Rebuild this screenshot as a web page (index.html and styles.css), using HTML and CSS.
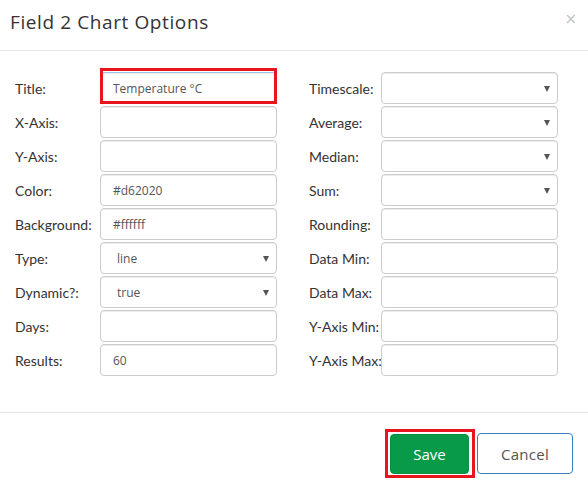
FILE: index.html
```html
<!DOCTYPE html>
<html>
<head>
<meta charset="utf-8">
<link rel="stylesheet" href="styles.css">
</head>
<body>
<div class="modal">
  <div class="modal-header">
    <h4 class="modal-title">Field 2 Chart Options</h4>
    <span class="close">×</span>
  </div>
  <div class="modal-body">
    <div class="cols">
      <div class="col col-left">
        <div class="row"><label>Title:</label><div class="field highlight"><input class="input" value="Temperature °C"></div></div>
        <div class="row"><label>X-Axis:</label><div class="field"><input class="input" value=""></div></div>
        <div class="row"><label>Y-Axis:</label><div class="field"><input class="input" value=""></div></div>
        <div class="row"><label>Color:</label><div class="field"><input class="input" value="#d62020"></div></div>
        <div class="row"><label>Background:</label><div class="field"><input class="input" value="#ffffff"></div></div>
        <div class="row"><label>Type:</label><div class="field select"><span class="sel-text">line</span></div></div>
        <div class="row"><label>Dynamic?:</label><div class="field select"><span class="sel-text">true</span></div></div>
        <div class="row"><label>Days:</label><div class="field"><input class="input" value=""></div></div>
        <div class="row"><label>Results:</label><div class="field"><input class="input" value="60"></div></div>
      </div>
      <div class="col col-right">
        <div class="row"><label>Timescale:</label><div class="field select"><span class="sel-text"></span></div></div>
        <div class="row"><label>Average:</label><div class="field select"><span class="sel-text"></span></div></div>
        <div class="row"><label>Median:</label><div class="field select"><span class="sel-text"></span></div></div>
        <div class="row"><label>Sum:</label><div class="field select"><span class="sel-text"></span></div></div>
        <div class="row"><label>Rounding:</label><div class="field"><input class="input" value=""></div></div>
        <div class="row"><label>Data Min:</label><div class="field"><input class="input" value=""></div></div>
        <div class="row"><label>Data Max:</label><div class="field"><input class="input" value=""></div></div>
        <div class="row"><label>Y-Axis Min:</label><div class="field"><input class="input" value=""></div></div>
        <div class="row"><label>Y-Axis Max:</label><div class="field"><input class="input" value=""></div></div>
      </div>
    </div>
  </div>
  <div class="modal-footer">
    <span class="save-wrap"><button class="btn btn-save">Save</button></span>
    <button class="btn btn-cancel">Cancel</button>
  </div>
</div>
</body>
</html>
```

FILE: styles.css
```css
* { box-sizing: border-box; }
html, body { margin: 0; padding: 0; background: #fff; }
body {
  width: 588px;
  height: 490px;
  overflow: hidden;
  font-family: "Lato", "Open Sans", sans-serif;
  color: #333;
}
.modal { width: 588px; }
.modal-header {
  height: 51px;
  border-bottom: 1px solid #e5e5e5;
  display: flex;
  align-items: center;
  justify-content: space-between;
  padding: 0 11px 6px 10px;
}
.modal-title {
  margin: 0;
  font-family: "Open Sans", sans-serif;
  font-weight: 400;
  font-size: 19px;
  letter-spacing: 0.6px;
  color: #333;
}
.close {
  font-family: "DejaVu Sans", sans-serif;
  font-size: 15px;
  color: #c4c4c4;
  line-height: 1;
  margin-top: -6px;
}
.modal-body { padding: 21px 15px 36px 15px; }
.cols {
  display: grid;
  grid-template-columns: 262px 249px;
  column-gap: 32px;
}
.row {
  display: flex;
  align-items: center;
  height: 32px;
  margin-bottom: 2px;
}
.row:last-child { margin-bottom: 0; }
.col-left label { width: 85px; flex: none; }
.col-right label { width: 72px; flex: none; }
label {
  font-size: 14px;
  color: #333;
  white-space: nowrap;
}
.field {
  position: relative;
  width: 177px;
  height: 32px;
  flex: none;
}
.input, .select {
  display: block;
  width: 177px;
  height: 32px;
  border: 1px solid #ccc;
  border-radius: 4px;
  box-shadow: inset 0 1px 1px rgba(0,0,0,0.075);
  background: #fff;
  font-family: "Open Sans", sans-serif;
  font-size: 12px;
  color: #555;
  padding: 0 12px;
  outline: none;
}
.select {
  display: flex;
  align-items: center;
  padding-left: 16px;
}
.select::after {
  content: "";
  position: absolute;
  right: 7px;
  top: 13px;
  border-left: 3.5px solid transparent;
  border-right: 3.5px solid transparent;
  border-top: 6px solid #555;
}
.highlight::after {
  content: "";
  position: absolute;
  left: 0;
  right: 0;
  top: -4px;
  bottom: 0;
  border: 3px solid #e8151f;
  pointer-events: none;
}
.highlight .input { border-color: #9ec3e8; }
.modal-footer {
  border-top: 1px solid #e5e5e5;
  padding: 20px 15px 15px;
  display: flex;
  justify-content: flex-end;
  align-items: center;
  gap: 8px;
}
.btn {
  font-family: "Open Sans", sans-serif;
  font-size: 15px;
  border-radius: 4px;
  cursor: pointer;
}
.save-wrap { position: relative; display: block; }
.save-wrap::after {
  content: "";
  position: absolute;
  left: -5px;
  right: -6px;
  top: -5px;
  bottom: -4px;
  border: 3px solid #e8151f;
  pointer-events: none;
}
.btn-save {
  display: block;
  width: 79px;
  height: 40px;
  background: #089a48;
  border: 1px solid #08913f;
  color: #fff;
}
.btn-cancel {
  width: 96px;
  height: 41px;
  background: #fff;
  border: 1px solid #3a7fb8;
  color: #555;
  letter-spacing: 0.3px;
}
```
